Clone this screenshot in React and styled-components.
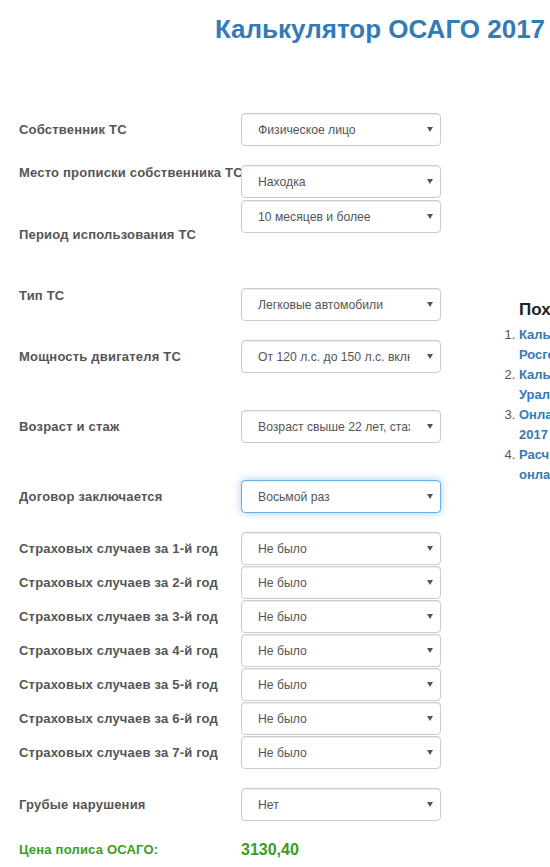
import styled, { createGlobalStyle } from "styled-components";

const GlobalStyle = createGlobalStyle`
  html, body {
    margin: 0;
    padding: 0;
    background: #fff;
    overflow-x: hidden;
  }
  body {
    font-family: "Liberation Sans", Arial, sans-serif;
    font-size: 13px;
    color: #555;
  }
`;

const rows = [
  { label: "Собственник ТС", value: "Физическое лицо", gap: 0, pad: 9 },
  { label: "Место прописки собственника ТС", value: "Находка", gap: 19, pad: 0 },
  { label: "Период использования ТС", value: "10 месяцев и более", gap: 2, pad: 27 },
  { label: "Тип ТС", value: "Легковые автомобили", gap: 46, pad: 0 },
  { label: "Мощность двигателя ТС", value: "От 120 л.с. до 150 л.с. включительно", gap: 19, pad: 9 },
  { label: "Возраст и стаж", value: "Возраст свыше 22 лет, стаж свыше 3 лет", gap: 37, pad: 9 },
  { label: "Договор заключается", value: "Восьмой раз", gap: 37, pad: 9, focused: true },
  ...[1, 2, 3, 4, 5, 6, 7].map((n) => ({
    label: `Страховых случаев за ${n}-й год`,
    value: "Не было",
    gap: n === 1 ? 19 : 1,
    pad: 9,
  })),
  { label: "Грубые нарушения", value: "Нет", gap: 19, pad: 9 },
];

const related = [
  "Калькулятор ОСАГО Росгосстрах",
  "Калькулятор ОСАГО Уралсиб",
  "Онлайн расчет ОСАГО 2017",
  "Расчет КБМ ОСАГО онлайн",
];

const App = () => {
  return (
    <>
      <GlobalStyle />
      <Page>
        <Title>Калькулятор ОСАГО 2017</Title>
        <Content>
          <Form>
            {rows.map((row) => (
              <Row key={row.label} $gap={row.gap}>
                <Label $pad={row.pad}>{row.label}</Label>
                <Select $focused={row.focused}>
                  <span>{row.value}</span>
                  <Caret />
                </Select>
              </Row>
            ))}
            <Price>
              <span>Цена полиса ОСАГО:</span>
              <strong>3130,40</strong>
            </Price>
          </Form>
          <Sidebar>
            <h3>Похожие статьи</h3>
            <ol>
              {related.map((item) => (
                <li key={item}>
                  <a href="/">{item}</a>
                </li>
              ))}
            </ol>
          </Sidebar>
        </Content>
      </Page>
    </>
  );
};
export default App;

/********************* styled components *************************/
const Page = styled.div`
  width: 760px;
`;

const Title = styled.h1`
  margin: 15px 0 0;
  text-align: center;
  font-size: 26px;
  line-height: 1.1;
  font-weight: 700;
  color: #337ab7;
`;

const Content = styled.div`
  display: flex;
  align-items: flex-start;
`;

const Form = styled.div`
  width: 484px;
  flex-shrink: 0;
  padding: 69px 0 0 19px;
  box-sizing: border-box;
`;

const Row = styled.div`
  display: grid;
  grid-template-columns: 222px 200px;
  align-items: start;
  margin-top: ${(p) => p.$gap}px;
`;

const Label = styled.label`
  padding-top: ${(p) => p.$pad}px;
  font-weight: 700;
  font-size: 13px;
  line-height: 15px;
  letter-spacing: 0.2px;
  color: #555;
  white-space: nowrap;
`;

const Select = styled.div`
  position: relative;
  height: 33px;
  box-sizing: border-box;
  padding: 2px 30px 0 16px;
  display: flex;
  align-items: center;
  border: 1px solid ${(p) => (p.$focused ? "#66afe9" : "#ccc")};
  border-radius: 4px;
  background: #fff;
  box-shadow: ${(p) =>
    p.$focused
      ? "inset 0 1px 1px rgba(0,0,0,.075), 0 0 8px rgba(102,175,233,.6)"
      : "inset 0 1px 1px rgba(0,0,0,.075)"};
  font-size: 12.2px;
  color: #555;

  span {
    overflow: hidden;
    white-space: nowrap;
  }
`;

const Caret = styled.i`
  position: absolute;
  right: 7px;
  top: 50%;
  margin-top: -2px;
  width: 0;
  height: 0;
  border-left: 3px solid transparent;
  border-right: 3px solid transparent;
  border-top: 5px solid #555;
`;

const Price = styled.div`
  display: grid;
  grid-template-columns: 222px auto;
  align-items: center;
  margin-top: 19px;
  line-height: 20px;
  color: #3c9d1e;
  font-weight: 700;

  span {
    font-size: 13px;
    letter-spacing: 0.2px;
  }

  strong {
    font-size: 16px;
  }
`;

const Sidebar = styled.aside`
  width: 176px;
  margin-left: 19px;
  padding-top: 256px;

  h3 {
    margin: 0 0 5px 16px;
    font-size: 17px;
    line-height: 20px;
    color: #222;
    white-space: nowrap;
  }

  ol {
    margin: 0;
    padding-left: 16px;
    color: #555;
    font-size: 13px;
    line-height: 20px;
  }

  li::marker {
    color: #555;
    font-weight: 400;
  }

  a {
    color: #337ab7;
    font-weight: 700;
    text-decoration: none;
  }
`;
